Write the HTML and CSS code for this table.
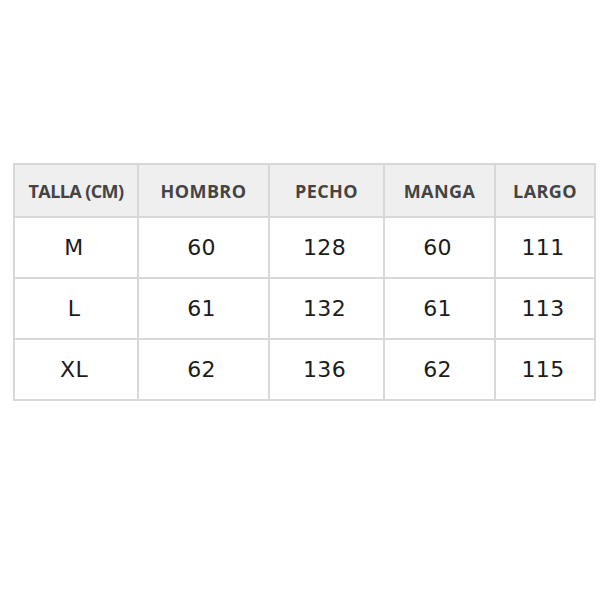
FILE: index.html
```html
<!DOCTYPE html>
<html lang="es">
<head>
<meta charset="utf-8">
<link rel="stylesheet" href="styles.css">
</head>
<body>
<div class="page">
  <table class="sizes">
    <colgroup>
      <col class="c1"><col class="c2"><col class="c3"><col class="c4"><col class="c5">
    </colgroup>
    <thead>
      <tr><th class="first">TALLA (CM)</th><th>HOMBRO</th><th>PECHO</th><th>MANGA</th><th>LARGO</th></tr>
    </thead>
    <tbody>
      <tr><td>M</td><td>60</td><td>128</td><td>60</td><td>111</td></tr>
      <tr><td>L</td><td>61</td><td>132</td><td>61</td><td>113</td></tr>
      <tr><td>XL</td><td>62</td><td>136</td><td>62</td><td>115</td></tr>
    </tbody>
  </table>
</div>
</body>
</html>
```

FILE: styles.css
```css
html, body { margin: 0; padding: 0; background: #fff; }
.page {
  width: 610px;
  height: 610px;
  box-sizing: border-box;
  padding: 163px 0 0 13px;
}
.sizes {
  border-collapse: collapse;
  table-layout: fixed;
  width: 581px;
}
.c1 { width: 124px; }
.c2 { width: 131px; }
.c3 { width: 115px; }
.c4 { width: 111px; }
.c5 { width: 100px; }
.sizes th, .sizes td {
  border: 2px solid #d8d8d8;
  text-align: center;
  padding: 0;
}
.sizes th {
  background: #efefef;
  height: 51px;
  font-family: "Open Sans", sans-serif;
  font-weight: 700;
  font-size: 18px;
  color: #444;
  letter-spacing: 0.4px;
}
.sizes th.first {
  letter-spacing: -0.6px;
}
.sizes td {
  height: 59px;
  font-family: "DejaVu Sans", sans-serif;
  font-size: 22px;
  color: #1c1c1c;
  letter-spacing: 0.3px;
  padding-right: 4px;
}
```
